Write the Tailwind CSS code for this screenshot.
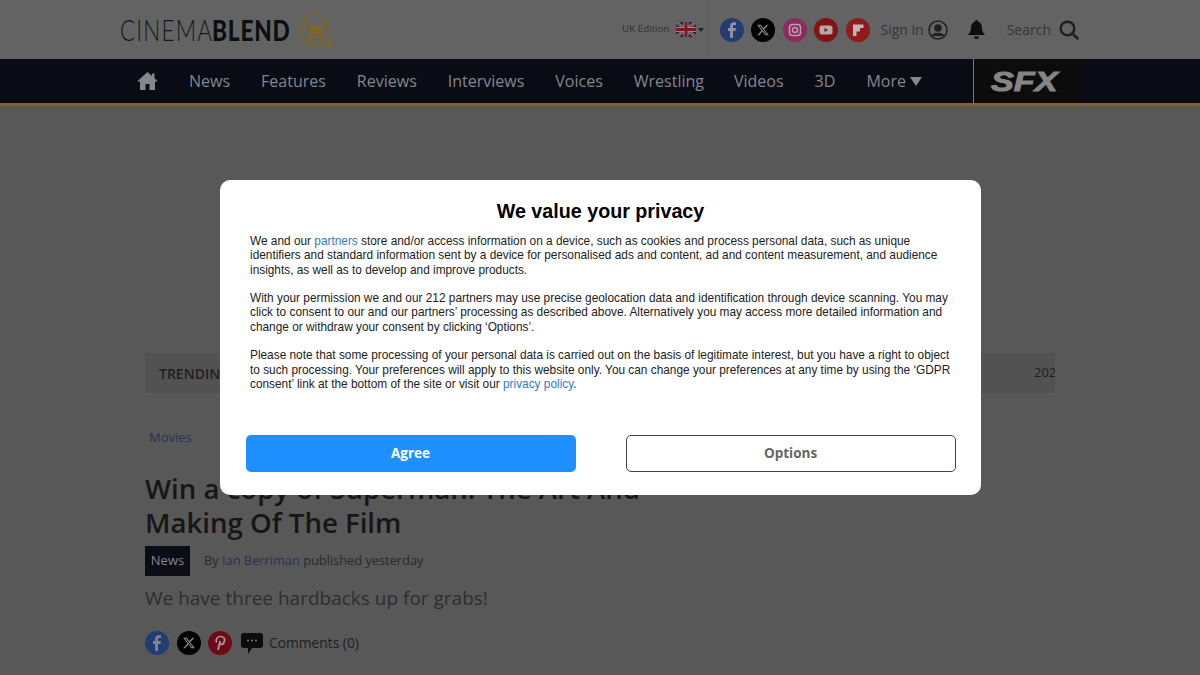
<!DOCTYPE html>
<html lang="en"><head><meta charset="utf-8"><title>Cinemablend</title>
<script src="https://cdn.jsdelivr.net/npm/@tailwindcss/browser@4"></script></head>
<body class="relative h-[675px] w-[1200px] overflow-hidden bg-[#585858] font-['Open_Sans',sans-serif]">
<header class="flex h-[59px] items-center bg-[#636363] pl-[120px] pr-[121px]">
  <a class="flex items-center">
    <span class="block w-[92px] origin-left scale-x-[0.775] font-['Lato',sans-serif] text-[29px] font-light leading-none tracking-[1.5px] text-[#15171c]">CINEMA</span>
    <span class="block w-[84px] origin-left scale-x-[0.78] font-['Lato',sans-serif] text-[29px] font-black leading-none tracking-[1px] text-[#0c0e13]">BLEND</span>
    <svg class="ml-[1px] h-[38px] w-[36px]" viewBox="0 0 36 38" fill="none" stroke="#7d6428" stroke-width="1.500"><path d="M10 5c3-3 12-3 15 0l3 7-3 13H12L8 12z"/><path d="M11 12c5 2 6 3 15 3l-3 8H14z" fill="#7d6428" stroke="none"/><path d="M9 8c-6 3-7 14-3 22h5M26 8c6 3 7 12 6 20"/><path d="M12 27h13l1 9H11zM18.500 28v7"/><path d="M32 27l2.500 6-2.500 3-2.500-3z" fill="#7d6428"/></svg>
  </a>
  <div class="ml-auto flex h-full items-center">
    <span class="text-[9.800px] text-[#2e3034]">UK Edition</span>
    <svg class="ml-[6px] h-[15px] w-[20px]" viewBox="0 0 20 15"><rect width="20" height="15" fill="#1f2b4d"/><path d="M0 0l20 15M20 0L0 15" stroke="#888" stroke-width="3"/><path d="M0 0l20 15M20 0L0 15" stroke="#7a1a22" stroke-width="1"/><path d="M10 0v15M0 7.500h20" stroke="#888" stroke-width="5"/><path d="M10 0v15M0 7.500h20" stroke="#7a1a22" stroke-width="3"/></svg>
    <span class="ml-[2px] mr-[5px] border-x-[3px] border-t-[4px] border-x-transparent border-t-[#222]"></span>
    <div class="flex h-full items-center gap-[7.500px] border-l border-[#5f5f5f] pl-[10px]">
      <svg class="h-6 w-6" viewBox="0 0 24 24"><circle cx="12" cy="12" r="12" fill="#233d73"/><path d="M13 20v-7h2.500l.4-3H13V8.300c0-.8.300-1.300 1.400-1.300H16V4.300c-.4 0-1.200-.1-2.200-.1-2.200 0-3.700 1.300-3.700 3.800V10H8v3h2.100v7z" fill="#8d93a3"/></svg>
      <svg class="h-6 w-6" viewBox="0 0 24 24"><circle cx="12" cy="12" r="12" fill="#000"/><path transform="translate(5.400 5.400) scale(.55)" d="M18.244 2.250h3.308l-7.227 8.260 8.502 11.240H16.170l-5.214-6.817L4.990 21.750H1.680l7.730-8.835L1.254 2.250H8.080l4.713 6.231zm-1.161 17.520h1.833L7.084 4.126H5.117z" fill="#8a8a8a"/></svg>
      <svg class="h-6 w-6" viewBox="0 0 24 24"><circle cx="12" cy="12" r="12" fill="#8f2a5c"/><rect x="6.500" y="6.500" width="11" height="11" rx="3" fill="none" stroke="#b9a0ac" stroke-width="1.500"/><circle cx="12" cy="12" r="2.500" fill="none" stroke="#b9a0ac" stroke-width="1.500"/></svg>
      <svg class="h-6 w-6" viewBox="0 0 24 24"><circle cx="12" cy="12" r="12" fill="#821414"/><rect x="5.500" y="7.500" width="13" height="9" rx="2.500" fill="#b8a8a8"/><path d="M10.500 10v4l3.500-2z" fill="#821414"/></svg>
      <svg class="h-6 w-6" viewBox="0 0 24 24"><circle cx="12" cy="12" r="12" fill="#8f1b1b"/><path d="M7 6.500h10.500v3.500H14v3.500h-3.500V18H7z" fill="#c4b4b4"/></svg>
    </div>
    <span class="ml-[11px] text-[14px] text-[#33363b]">Sign in</span>
    <svg class="ml-[4px] h-5 w-5" viewBox="0 0 20 20" fill="none" stroke="#1e2024" stroke-width="1.500"><circle cx="10" cy="10" r="9"/><circle cx="10" cy="8" r="3" fill="#1e2024"/><path d="M4.500 16c1-3.500 10-3.500 11 0" fill="#1e2024"/></svg>
    <svg class="ml-[20px] h-[19px] w-[17px]" viewBox="0 0 17 19" fill="#0c0e12"><path d="M8.500 0a1.500 1.500 0 0 1 1.500 1.700c3 .7 4 3 4 6 0 3.500 1 4.800 2.500 6.300v1H.500v-1C2 12.500 3 11.200 3 7.700c0-3 1-5.300 4-6A1.500 1.500 0 0 1 8.500 0zM6 16.500h5a2.500 2.500 0 0 1-5 0z"/></svg>
    <span class="ml-[22px] text-[14px] text-[#33363b]">Search</span>
    <svg class="ml-[8px] h-5 w-5" viewBox="0 0 20 20" fill="none" stroke="#1e2024" stroke-width="2.500"><circle cx="8.500" cy="8.500" r="6.800"/><path d="M13.500 13.500l5 5" stroke-linecap="round"/></svg>
  </div>
</header>
<nav class="flex h-[47px] items-start border-b-[3px] border-[#80652a] bg-[#090c15] pl-[137px]">
  <div class="flex h-[44px] items-center gap-[31px] text-[16px] text-[#84878d]">
    <svg class="h-[18px] w-[21px]" viewBox="0 0 21 18" fill="#84878d"><path d="M10.500 0L0 9.500h3V18h5.500v-6h4v6H18V9.500h3L17.500 6.300V1.500H15v2.500z"/></svg>
    <span>News</span><span>Features</span><span>Reviews</span><span>Interviews</span><span>Voices</span><span class="mr-[-1px]">Wrestling</span><span>Videos</span><span>3D</span>
    <span class="flex items-center gap-[4px]">More <span class="border-x-[6px] border-t-[9px] border-x-transparent border-t-[#84878d]"></span></span>
  </div>
  <div class="absolute left-[973px] top-[59px] flex h-[44px] w-[107px] items-center border-l border-[#777] bg-[#0c0c0d] pl-[17px] pt-[1px]">
    <span class="block origin-left scale-x-[1.22] font-['Liberation_Sans',sans-serif] text-[28px] font-bold italic leading-none text-[#858585] [-webkit-text-stroke:1px_#858585]">SFX</span>
  </div>
</nav>
<main class="mx-[145px] mt-[247px] w-[910px]">
  <div class="flex h-[40px] items-center justify-between overflow-hidden bg-[#525252] pl-[14px] text-[14px] font-semibold text-[#1f1f1f]">
    <span>TRENDING</span><span class="w-[21px] overflow-hidden text-[13px] font-normal">2025</span>
  </div>
  <div class="mt-[35px] pl-[4px] text-[13px] leading-[18px] text-[#2a3350]">Movies</div>
  <h1 class="mt-[25px] w-[520px] text-[27.600px] font-semibold leading-[34px] text-[#161616]">Win a copy of Superman: The Art And Making Of The Film</h1>
  <div class="mt-[7px] flex items-center">
    <span class="flex h-[30px] w-[45px] items-center justify-center bg-[#0b0c16] text-[13px] text-[#84878d]">News</span>
    <span class="ml-[14px] text-[12.800px] text-[#2a2a2a]">By <span class="text-[#2a3350]">Ian Berriman</span> published yesterday</span>
  </div>
  <p class="mt-[9px] text-[19px] leading-[26px] text-[#2e2e2e]">We have three hardbacks up for grabs!</p>
  <div class="mt-[20px] flex items-center gap-[7.500px]">
    <svg class="h-6 w-6" viewBox="0 0 24 24"><circle cx="12" cy="12" r="12" fill="#233d73"/><path d="M13 20v-7h2.500l.4-3H13V8.300c0-.8.300-1.300 1.400-1.300H16V4.300c-.4 0-1.200-.1-2.200-.1-2.200 0-3.700 1.300-3.700 3.800V10H8v3h2.100v7z" fill="#7e8494"/></svg>
    <svg class="h-6 w-6" viewBox="0 0 24 24"><circle cx="12" cy="12" r="12" fill="#000"/><path transform="translate(5.400 5.400) scale(.55)" d="M18.244 2.250h3.308l-7.227 8.260 8.502 11.240H16.170l-5.214-6.817L4.990 21.750H1.680l7.730-8.835L1.254 2.250H8.080l4.713 6.231zm-1.161 17.520h1.833L7.084 4.126H5.117z" fill="#8a8a8a"/></svg>
    <svg class="h-6 w-6" viewBox="0 0 24 24"><circle cx="12" cy="12" r="12" fill="#6f0b18"/><path d="M10 19l2.200-9M8.500 11.500C7 8 10 5.500 12.500 5.500c3 0 4.500 2 4 4.500-.5 3-3.500 4.500-5 2.500" fill="none" stroke="#a99aa0" stroke-width="1.700"/></svg>
    <svg class="ml-[1px] h-[21px] w-[22px]" viewBox="0 0 22 21"><path d="M3 0h16a3 3 0 0 1 3 3v9a3 3 0 0 1-3 3h-8l-4 6v-6H3a3 3 0 0 1-3-3V3a3 3 0 0 1 3-3z" fill="#0c0c0c"/><circle cx="7" cy="7.500" r="1" fill="#777"/><circle cx="11" cy="7.500" r="1" fill="#777"/><circle cx="15" cy="7.500" r="1" fill="#777"/></svg>
    <span class="ml-[-1px] text-[13.800px] text-[#1f1f1f]">Comments (0)</span>
  </div>
</main>
<section class="absolute left-[220px] top-[180px] flex h-[315px] w-[761px] flex-col rounded-[10px] bg-white font-['Liberation_Sans',sans-serif]">
  <h2 class="mt-[20px] text-center text-[19.700px] font-bold leading-[23px] text-black">We value your privacy</h2>
  <div class="ml-[30px] mt-[11px] w-[702px] space-y-[14.300px] text-[11.850px] leading-[14.300px] text-[#222]">
    <p>We and our <span class="text-[#2f7ebf]">partners</span> store and/or access information on a device, such as cookies and process personal data, such as unique identifiers and standard information sent by a device for personalised ads and content, ad and content measurement, and audience insights, as well as to develop and improve products.</p>
    <p>With your permission we and our 212 partners may use precise geolocation data and identification through device scanning. You may click to consent to our and our partners’ processing as described above. Alternatively you may access more detailed information and change or withdraw your consent by clicking ‘Options’.</p>
    <p>Please note that some processing of your personal data is carried out on the basis of legitimate interest, but you have a right to object to such processing. Your preferences will apply to this website only. You can change your preferences at any time by using the ‘GDPR consent’ link at the bottom of the site or visit our <span class="text-[#2f7ebf]">privacy policy</span>.</p>
  </div>
  <div class="mt-auto mb-[23px] flex justify-between pl-[26px] pr-[25px] text-[13.500px] font-bold">
    <button class="h-[37px] w-[330px] rounded-[5px] bg-[#1e90ff] pr-[1px] font-['Open_Sans',sans-serif] text-white">Agree</button>
    <button class="h-[37px] w-[330px] rounded-[5px] border border-[#444] bg-white pr-[1px] font-['Open_Sans',sans-serif] text-[#666]">Options</button>
  </div>
</section>
</body></html>
